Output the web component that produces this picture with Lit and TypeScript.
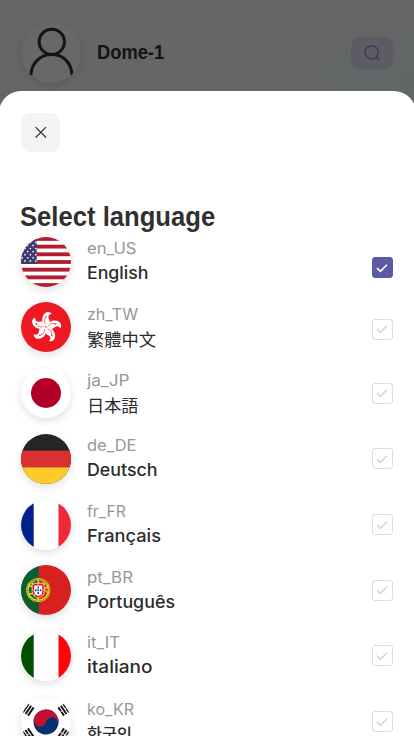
import { LitElement, html, svg, css } from "lit";
import { customElement, property } from "lit/decorators.js";
import { classMap } from "lit/directives/class-map.js";

interface Language {
  code: string;
  name: string;
  codeWidth: number;
  nameWidth: number;
  shift?: number;
  script?: string;
}

const LANGUAGES: Language[] = [
  { code: "en_US", name: "English", codeWidth: 49.5, nameWidth: 61.5, shift: 6 },
  { code: "zh_TW", name: "繁體中文", codeWidth: 51, nameWidth: 69, script: "tc", shift: 2 },
  { code: "ja_JP", name: "日本語", codeWidth: 42.5, nameWidth: 51.5, script: "jp" },
  { code: "de_DE", name: "Deutsch", codeWidth: 49.5, nameWidth: 70.5 },
  { code: "fr_FR", name: "Français", codeWidth: 39, nameWidth: 74 },
  { code: "pt_BR", name: "Português", codeWidth: 46, nameWidth: 88 },
  { code: "it_IT", name: "italiano", codeWidth: 33, nameWidth: 65.5 },
  { code: "ko_KR", name: "한국인", codeWidth: 47, nameWidth: 45, script: "kr" },
];

const petal = svg`
  <path fill="#fff" d="M25 24.5 C19.5 21.5 19 13.5 24.5 10.2 C26.6 9.3 28.6 10 29.8 11.4 C26.5 12.4 26 15 27.8 17.3 C29.5 20 28 23.2 25 24.5Z"/>
  <path fill="none" stroke="#ed1822" stroke-width=".6" d="M24.7 22.5 C22.5 20.5 22.6 17.5 24.2 15.4"/>
  <circle cx="24.4" cy="14.8" r=".75" fill="#ed1822"/>`;

const bars = (a: string[], x: number, y: number, angle: number) => svg`
  <g transform="translate(${x} ${y}) rotate(${angle})">
    ${a.map((kind, i) =>
      kind === "solid"
        ? svg`<rect x="-5" y=${-3.9 + i * 3} width="10" height="1.9" fill="#111"/>`
        : svg`<rect x="-5" y=${-3.9 + i * 3} width="4.6" height="1.9" fill="#111"/><rect x=".4" y=${-3.9 + i * 3} width="4.6" height="1.9" fill="#111"/>`
    )}
  </g>`;

const FLAGS: Record<string, unknown> = {
  en_US: svg`
    <rect width="50" height="50" fill="#fff"/>
    ${[0, 1, 2, 3, 4, 5, 6].map((i) => svg`<rect y=${i * 7.69} width="50" height="3.85" fill="#b01f30"/>`)}
    <rect width="15.7" height="26.8" fill="#3b3b6d"/>
    ${[0, 1, 2, 3, 4, 5, 6, 7].map((r) =>
      [0, 1, 2].map((c) => svg`<circle cx=${1.3 + c * 5.4 + (r % 2) * 2.7} cy=${2.2 + r * 3.1} r=".85" fill="#fff"/>`)
    )}`,
  zh_TW: svg`
    <rect width="50" height="50" fill="#ed1822"/>
    ${[0, 72, 144, 216, 288].map((a) => svg`<g transform="rotate(${a + 4} 25 25)">${petal}</g>`)}`,
  ja_JP: svg`<rect width="50" height="50" fill="#fff"/><circle cx="25" cy="25" r="15" fill="#b30028"/>`,
  de_DE: svg`
    <rect width="50" height="50" fill="#252525"/>
    <rect y="16.6" width="50" height="16.7" fill="#da3032"/>
    <rect y="33.3" width="50" height="16.7" fill="#ffcb2b"/>`,
  fr_FR: svg`
    <rect width="50" height="50" fill="#fff"/>
    <rect width="12.7" height="50" fill="#00208c"/>
    <rect x="37.5" width="12.5" height="50" fill="#ee2836"/>`,
  pt_BR: svg`
    <rect width="50" height="50" fill="#d8201e"/>
    <rect width="17.8" height="50" fill="#07602f"/>
    <circle cx="17.2" cy="25" r="10.8" fill="none" stroke="#f2df20" stroke-width="2.6"/>
    <circle cx="17.2" cy="25" r="11.2" fill="none" stroke="#5c5a16" stroke-width=".6"/>
    <path d="M7 21 Q17 21 28 28 M7 29 Q17 29 28 21 M17.2 13V37" fill="none" stroke="#e8d52a" stroke-width="1.5"/>
    <path d="M8 18 Q17 12 26 18 M7 25 Q17 33 27 25" fill="none" stroke="#69631b" stroke-width=".6"/>
    <path d="M11.1 18.3H23.3V26.5Q23.2 31.8 17.2 33Q11.2 31.8 11.1 26.5Z" fill="#d8201e" stroke="#fff" stroke-width=".7"/>
    <path d="M13.2 20.5H21.2V26.5Q21 30 17.2 31Q13.4 30 13.2 26.5Z" fill="#fff"/>
    ${[[17.2, 22.5], [14.8, 25.2], [17.2, 25.2], [19.6, 25.2], [17.2, 28]].map(
      ([x, y]) => svg`<rect x=${x - 0.8} y=${y - 0.9} width="1.6" height="1.9" rx=".5" fill="#223b91"/>`
    )}
    ${[[12.1, 19.4], [17.2, 19.2], [22.3, 19.4], [12.1, 25], [22.3, 25], [13.6, 30], [20.8, 30]].map(
      ([x, y]) => svg`<rect x=${x - 0.6} y=${y - 0.6} width="1.2" height="1.2" fill="#f6df35"/>`
    )}`,
  it_IT: svg`
    <rect width="50" height="50" fill="#fff"/>
    <rect width="12.7" height="50" fill="#005000"/>
    <rect x="37.5" width="12.5" height="50" fill="#ff0505"/>`,
  ko_KR: svg`
    <rect width="50" height="50" fill="#fff"/>
    <g transform="rotate(14 25 25)">
      <circle cx="25" cy="25" r="12.5" fill="#053071"/>
      <path d="M12.5 25A12.5 12.5 0 0 1 37.5 25A6.25 6.25 0 0 0 25 25A6.25 6.25 0 0 1 12.5 25Z" fill="#c3102e"/>
    </g>
    ${bars(["solid", "solid", "solid"], 7.3, 12.8, -56)}
    ${bars(["split", "solid", "split"], 42.7, 12.8, 56)}
    ${bars(["solid", "split", "solid"], 7.3, 37.2, 56)}
    ${bars(["split", "split", "split"], 42.7, 37.2, -56)}`,
};

@customElement("language-row")
class LanguageRow extends LitElement {
  @property({ attribute: false }) language!: Language;
  @property({ type: Boolean }) selected = false;

  static styles = css`
    :host {
      display: flex;
      align-items: center;
      height: 65.7px;
      flex: none;
    }
    .flag {
      width: 50px;
      height: 50px;
      flex: none;
      border-radius: 50%;
      overflow: hidden;
      box-shadow: 0 3px 8px rgba(0, 0, 0, 0.13);
    }
    .flag svg {
      display: block;
    }
    .labels {
      margin-left: 15.6px;
      padding-top: 1px;
      flex: 1;
      white-space: nowrap;
    }
    .code,
    .name {
      display: block;
      width: max-content;
      transform-origin: left;
      font-family: Inter, "Noto Sans", sans-serif;
    }
    .code {
      font-size: 15.5px;
      line-height: 22px;
      color: #979797;
    }
    .name {
      font-size: 17px;
      font-weight: 550;
      line-height: 26px;
      color: #2b2b2b;
    }
    .tc {
      font: 400 17px/26px "Noto Sans CJK TC", sans-serif;
    }
    .jp {
      font: 400 17px/26px "Noto Sans CJK JP", sans-serif;
    }
    .kr {
      font: 500 16px/24px "Noto Sans CJK KR", sans-serif;
    }
    .check {
      box-sizing: border-box;
      width: 21px;
      height: 21px;
      margin-right: 0.5px;
      border: 1.5px solid #dedede;
      border-radius: 3px;
      color: #d6d6d6;
      display: grid;
      place-items: center;
    }
    .check.on {
      background: #5c5aa2;
      border-color: #5c5aa2;
      color: #fff;
    }
  `;

  firstUpdated() {
    this.renderRoot.querySelectorAll<HTMLElement>("[data-width]").forEach((label) => {
      const ratio = Number(label.dataset.width) / label.getBoundingClientRect().width;
      label.style.transform = `scaleX(${ratio})`;
    });
  }

  render() {
    const l = this.language;
    return html`
      <div class="flag"><svg width="50" height="50" viewBox="0 0 50 50">${FLAGS[l.code]}</svg></div>
      <div class="labels">
        <span class="code" data-width=${l.codeWidth}>${l.code}</span>
        <span class=${classMap({ name: true, [l.script ?? "latin"]: true })} data-width=${l.nameWidth}>${l.name}</span>
      </div>
      <div class=${classMap({ check: true, on: this.selected })} style="margin-top:${(l.shift ?? 0) * 2}px">
        <svg width="14" height="12" viewBox="0 0 14 12" fill="none" stroke="currentColor" stroke-width="1.6">
          <path d="M2 6.1L5.4 9.4L12 2.8" />
        </svg>
      </div>
    `;
  }
}

@customElement("app-root")
class AppRoot extends LitElement {
  static styles = css`
    :host {
      display: flex;
      flex-direction: column;
      height: 736px;
      overflow: hidden;
      font-family: "Liberation Sans", Arial, sans-serif;
      background: radial-gradient(ellipse 150px 70px at 414px 80px, #606667, rgba(102, 102, 102, 0)) #666;
    }
    .header {
      display: flex;
      align-items: center;
      flex: none;
      height: 90.5px;
      box-sizing: border-box;
      padding: 15px 20px 0 21px;
    }
    .avatar {
      width: 60px;
      height: 60px;
      border-radius: 50%;
      background: #686868;
      overflow: hidden;
      box-shadow: 0 2px 7px rgba(0, 0, 0, 0.13);
    }
    .avatar svg {
      display: block;
    }
    .user {
      flex: 1;
      margin-left: 16px;
      font-size: 20px;
      font-weight: 700;
      color: #141414;
      transform: scaleX(0.915);
      transform-origin: left;
    }
    .search {
      width: 43.5px;
      height: 32px;
      border-radius: 10px;
      background: #5d5c63;
      display: grid;
      place-items: center;
    }
    .sheet {
      flex: 1;
      min-height: 0;
      overflow: hidden;
      display: flex;
      flex-direction: column;
      background: #fff;
      border-radius: 22px 22px 0 0;
      margin: 0 -2px 0 -1px;
      padding: 22.5px 23px 0 22px;
    }
    .close {
      width: 39px;
      height: 39px;
      flex: none;
      border-radius: 9px;
      background: #f4f4f4;
      display: grid;
      place-items: center;
    }
    .title {
      margin: 49.5px 0 0 -1px;
      font-size: 27.5px;
      line-height: 30px;
      color: #303030;
      transform: scaleX(0.932);
      transform-origin: left;
    }
    .list {
      display: flex;
      flex-direction: column;
      margin-top: -2.6px;
    }
  `;

  render() {
    return html`
      <div class="header">
        <div class="avatar">
          <svg width="60" height="60" viewBox="0 0 60 60" fill="none" stroke="#151515" stroke-width="3">
            <circle cx="30.8" cy="18.8" r="12.6" />
            <path d="M9.8 52.5C10.5 40 19 31.6 30.8 31.6S50.6 40 51 52.5" />
          </svg>
        </div>
        <div class="user">Dome-1</div>
        <div class="search">
          <svg width="18" height="18" viewBox="0 0 18 18" fill="none" stroke="#37345f" stroke-width="1.25">
            <circle cx="8.7" cy="8.4" r="6.6" />
            <path d="M13.3 13L16 15.7" />
          </svg>
        </div>
      </div>
      <div class="sheet">
        <div class="close">
          <svg width="14" height="14" viewBox="0 0 14 14" fill="none" stroke="#353535" stroke-width="1.25">
            <path d="M1.6 1.1L12 11.5M12 1.1L1.6 11.5" />
          </svg>
        </div>
        <h1 class="title">Select language</h1>
        <div class="list">
          ${LANGUAGES.map((l, i) => html`<language-row .language=${l} ?selected=${i === 0}></language-row>`)}
        </div>
      </div>
    `;
  }
}
